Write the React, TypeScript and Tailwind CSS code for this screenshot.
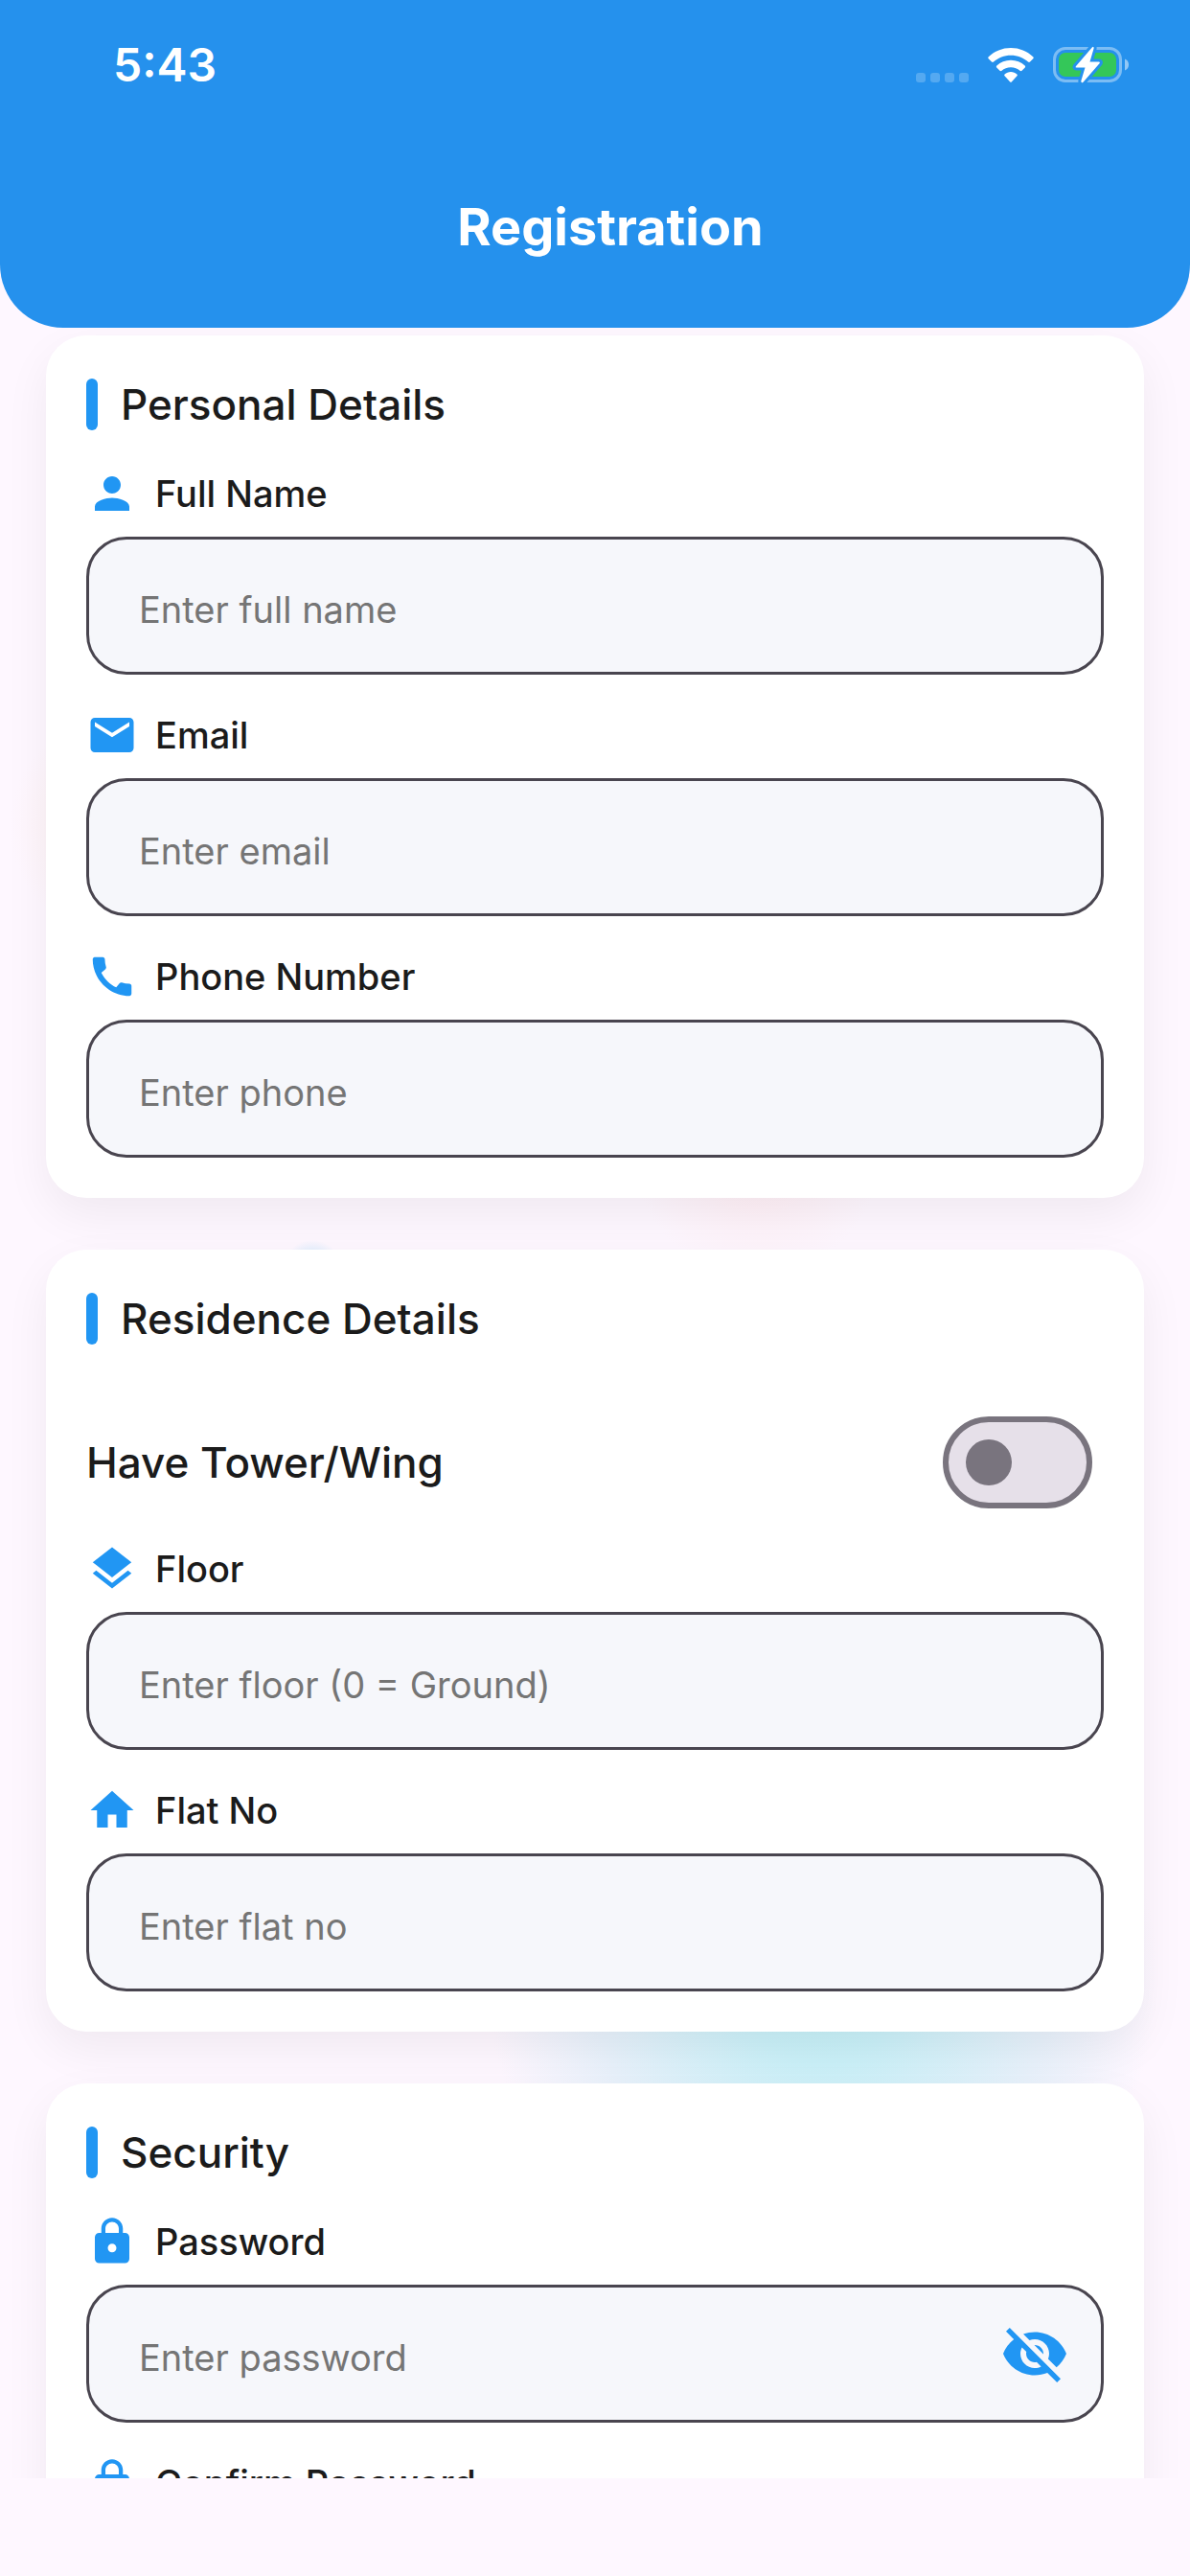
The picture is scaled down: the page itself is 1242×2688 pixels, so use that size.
import { useState } from "react";
import type { ReactNode } from "react";
import type { IconType } from "react-icons";
import {
  MdCall,
  MdEmail,
  MdHome,
  MdLayers,
  MdLock,
  MdLockOutline,
  MdPerson,
  MdVisibility,
  MdVisibilityOff,
} from "react-icons/md";

interface FieldProps {
  id: string;
  label: string;
  placeholder: string;
  icon: IconType;
  type?: string;
}

function StatusBar() {
  return (
    <div className="flex h-[130px] items-center justify-between pt-1.5 pr-16 pl-[118px]">
      <span className="text-5xl font-semibold">5:43</span>
      <div className="flex items-center gap-5">
        <svg width="55" height="36" viewBox="0 0 55 36" fill="white" fillOpacity="0.22">
          <rect x="0" y="26" width="10" height="10" rx="3" />
          <rect x="15" y="26" width="10" height="10" rx="3" />
          <rect x="30" y="26" width="10" height="10" rx="3" />
          <rect x="45" y="26" width="10" height="10" rx="3" />
        </svg>
        <svg width="48" height="36" viewBox="0 0 48 36" fill="white">
          <path d="M24 0C33 0 41 3.400 47.200 9.200Q48.200 10.200 47.300 11.200L44 14.600Q43 15.500 42 14.600C37 10.200 31 7.700 24 7.700S11 10.200 6 14.600Q5 15.500 4 14.600L.7 11.200Q-.2 10.200 .8 9.200C7 3.400 15 0 24 0Z" />
          <path d="M24 12.700C29.700 12.700 34.800 14.900 38.700 18.400Q39.700 19.400 38.800 20.400L35.500 23.700Q34.500 24.600 33.500 23.700C31 21.600 27.800 20.300 24 20.300S17 21.600 14.500 23.700Q13.500 24.600 12.500 23.700L9.200 20.400Q8.300 19.400 9.300 18.400C13.200 14.900 18.300 12.700 24 12.700Z" />
          <path d="M24 25C26.500 25 28.700 26 30.400 27.400Q31.300 28.300 30.400 29.300L25 35.200Q24 36.200 23 35.200L17.600 29.300Q16.700 28.300 17.600 27.400C19.300 26 21.500 25 24 25Z" />
        </svg>
        <svg width="79" height="40" viewBox="0 0 79 40">
          <rect x="1.500" y="2.500" width="69" height="34" rx="11.500" fill="none" stroke="white" strokeOpacity="0.4" strokeWidth="3" />
          <path d="M75 13.500C77.500 14.500 79 16.800 79 19.500S77.500 24.500 75 25.500Z" fill="white" fillOpacity="0.5" />
          <rect x="6" y="7" width="60" height="25" rx="7" fill="#34c759" />
          <path
            d="M41 1.200 23.800 21.200Q23 22.500 24.500 22.500H33.500L29.300 36.500Q29.300 39.300 31.500 37.800L48.700 18Q49.400 16.500 48 16.500H38.500L42.600 2.500Q42.800 0 41 1.200Z"
            fill="white"
            stroke="#2591ed"
            strokeWidth="6"
            strokeLinejoin="round"
            paintOrder="stroke"
          />
        </svg>
      </div>
    </div>
  );
}

function Section({ title, children }: { title: string; children: ReactNode }) {
  return (
    <section className="rounded-[42px] bg-white p-[42px] shadow-[0_18px_48px_rgba(0,0,0,0.06)]">
      <div className="mb-9 flex h-[60px] items-center gap-6">
        <span className="h-[54px] w-3 rounded-full bg-[#2196f3]" />
        <h2 className="text-[44px] font-medium">{title}</h2>
      </div>
      {children}
    </section>
  );
}

function Field({ id, label, placeholder, icon: Icon, type = "text" }: FieldProps) {
  const [visible, setVisible] = useState(false);
  const isPassword = type === "password";

  return (
    <div className="mb-9 last:mb-0">
      <label htmlFor={id} className="mb-[18px] flex h-[54px] items-center gap-[18px] text-[38px] font-medium">
        <Icon className="size-[54px] text-[#2196f3]" />
        {label}
      </label>
      <div className="flex h-36 items-center rounded-[42px] border-[3px] border-[#49454f] bg-[#f6f7fb] pr-[33px] pl-[52px]">
        <input
          id={id}
          name={id}
          type={isPassword && visible ? "text" : type}
          placeholder={placeholder}
          autoComplete="off"
          className="h-full min-w-0 flex-1 bg-transparent pt-2 text-[38px] outline-none placeholder:text-[#757575]"
        />
        {isPassword && (
          <button
            type="button"
            aria-label={visible ? "Hide password" : "Show password"}
            onClick={() => setVisible(!visible)}
            className="text-[#2196f3]"
          >
            {visible ? <MdVisibility className="size-[72px]" /> : <MdVisibilityOff className="size-[72px]" />}
          </button>
        )}
      </div>
    </div>
  );
}

export default function App() {
  const [hasTower, setHasTower] = useState(false);

  return (
    <div className="flex h-screen flex-col bg-[#fef7ff] font-['Inter',sans-serif] text-[#1b1b1b]">
      <header className="z-10 h-[342px] shrink-0 rounded-b-[66px] bg-[#2591ed] text-white">
        <StatusBar />
        <div className="flex h-[212px] items-center justify-center pl-8">
          <h1 className="text-[54px] font-bold">Registration</h1>
        </div>
      </header>

      <main className="min-h-0 flex-1 overflow-hidden bg-[radial-gradient(circle_at_858px_1720px,#c0eff5_0,#caf0f8_90px,#e8f1fb_240px,transparent_350px),radial-gradient(circle_at_790px_860px,#ffecf2_0,transparent_130px),radial-gradient(circle_at_130px_520px,#fff0ee_0,transparent_120px),radial-gradient(circle_at_326px_984px,#b8e0fa_0,transparent_32px)]">
        <form className="flex flex-col gap-[54px] px-12 pt-2">
          <Section title="Personal Details">
            <Field id="fullName" label="Full Name" placeholder="Enter full name" icon={MdPerson} />
            <Field id="email" label="Email" placeholder="Enter email" icon={MdEmail} type="email" />
            <Field id="phone" label="Phone Number" placeholder="Enter phone" icon={MdCall} type="tel" />
          </Section>

          <Section title="Residence Details">
            <div className="flex h-42 items-center justify-between pr-3">
              <label htmlFor="hasTower" className="text-[44px] font-medium">
                Have Tower/Wing
              </label>
              <input
                id="hasTower"
                type="checkbox"
                role="switch"
                checked={hasTower}
                onChange={(e) => setHasTower(e.target.checked)}
                className="flex h-24 w-[156px] appearance-none items-center rounded-full border-[6px] border-[#79747e] bg-[#e6e0e9] px-[18px] before:size-12 before:rounded-full before:bg-[#79747e] checked:justify-end"
              />
            </div>
            <Field id="floor" label="Floor" placeholder="Enter floor (0 = Ground)" icon={MdLayers} />
            <Field id="flatNo" label="Flat No" placeholder="Enter flat no" icon={MdHome} />
          </Section>

          <Section title="Security">
            <Field id="password" label="Password" placeholder="Enter password" icon={MdLock} type="password" />
            <Field
              id="confirmPassword"
              label="Confirm Password"
              placeholder="Confirm password"
              icon={MdLockOutline}
              type="password"
            />
          </Section>
        </form>
      </main>

      {/* home indicator area */}
      <div className="h-[102px] shrink-0" />
    </div>
  );
}
